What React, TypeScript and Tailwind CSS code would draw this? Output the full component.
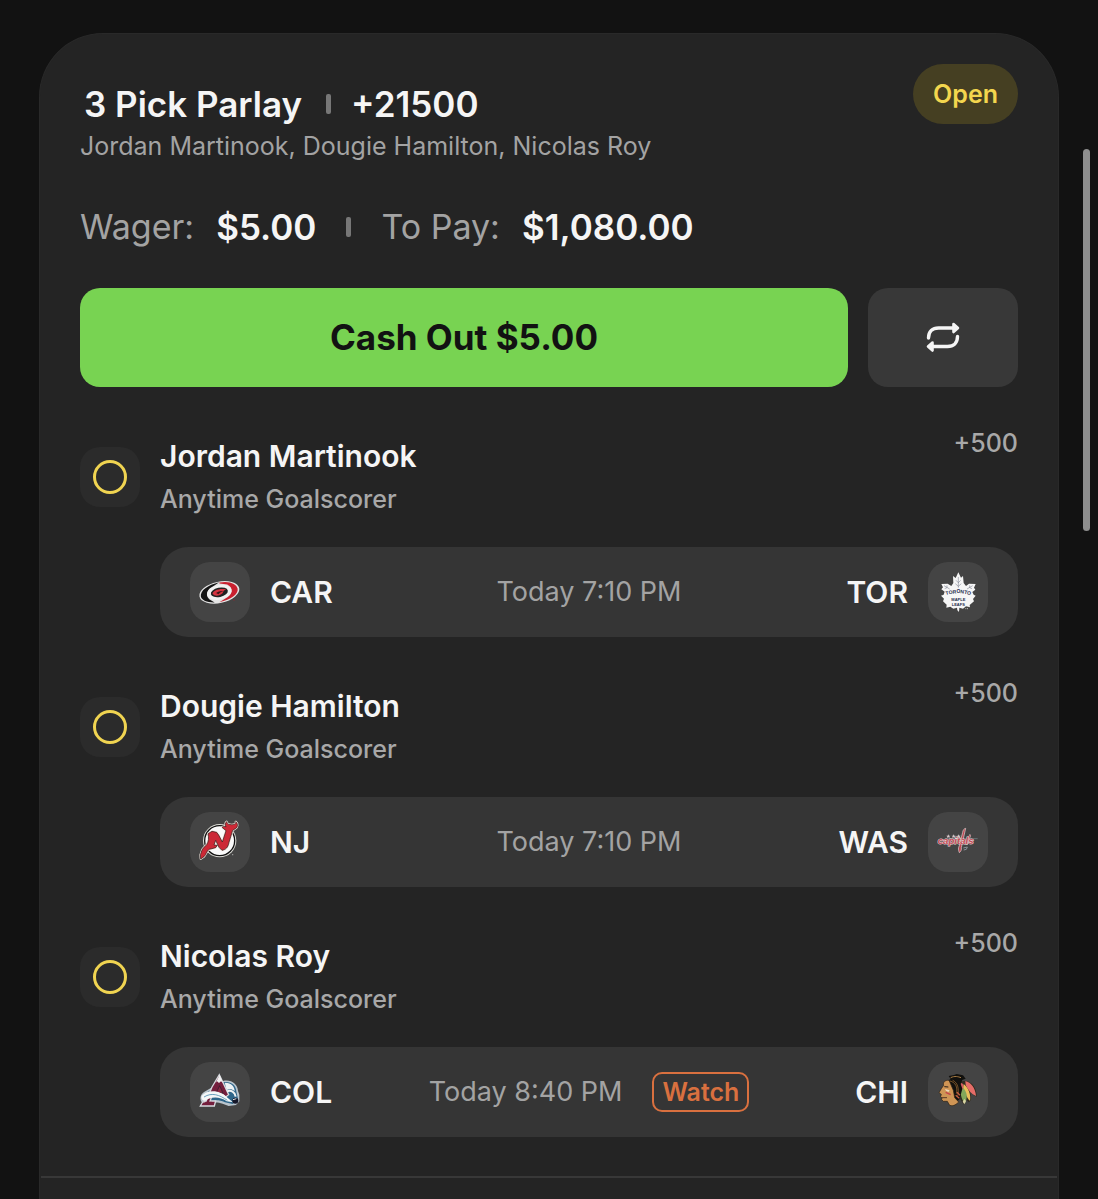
import type { ReactNode } from 'react';

type Team = { abbr: string; logo: ReactNode };

type Leg = {
  player: string;
  market: string;
  odds: string;
  away: Team;
  home: Team;
  time: string;
  watch?: boolean;
};

const legs: Leg[] = [
  {
    player: 'Jordan Martinook',
    market: 'Anytime Goalscorer',
    odds: '+500',
    away: { abbr: 'CAR', logo: <HurricanesLogo /> },
    home: { abbr: 'TOR', logo: <LeafsLogo /> },
    time: 'Today 7:10 PM',
  },
  {
    player: 'Dougie Hamilton',
    market: 'Anytime Goalscorer',
    odds: '+500',
    away: { abbr: 'NJ', logo: <DevilsLogo /> },
    home: { abbr: 'WAS', logo: <CapitalsLogo /> },
    time: 'Today 7:10 PM',
  },
  {
    player: 'Nicolas Roy',
    market: 'Anytime Goalscorer',
    odds: '+500',
    away: { abbr: 'COL', logo: <AvalancheLogo /> },
    home: { abbr: 'CHI', logo: <BlackhawksLogo /> },
    time: 'Today 8:40 PM',
    watch: true,
  },
];

export default function App() {
  return (
    <div className="flex min-h-screen flex-col bg-[#121212] px-[39px] pt-[33px] font-['Inter','Liberation_Sans',sans-serif] text-[#f5f5f5]">
      <main className="flex-1 rounded-t-[64px] border border-b-0 border-[#292929] bg-[#242424]">
        <div className="px-10 pt-[30px]">
          <header className="flex items-start justify-between">
            <div className="pt-4">
              <h1 className="flex items-center pl-1 text-[35px] leading-[48px] font-semibold">
                3 Pick Parlay
                <Separator className="mr-5 ml-6" />
                +21500
              </h1>
              <p className="text-[25px] leading-9 text-[#a3a3a3]">
                {legs.map(l => l.player).join(', ')}
              </p>
            </div>
            <span className="rounded-full bg-[#453f22] px-5 text-[25px] leading-[60px] font-semibold text-[#f3d64e]">
              Open
            </span>
          </header>

          {/* stake and payout */}
          <div className="mt-9 flex items-center text-[35px] leading-[54px]">
            <span className="text-[34px] text-[#a3a3a3]">Wager:</span>
            <span className="ml-[22px] font-semibold">$5.00</span>
            <Separator className="mx-[30px]" />
            <span className="text-[34px] text-[#a3a3a3]">To Pay:</span>
            <span className="ml-[22px] font-semibold">$1,080.00</span>
          </div>

          <div className="mt-[34px] flex gap-5">
            <button type="button" className="h-[99px] flex-1 rounded-[20px] bg-[#78d352] text-[35px] font-bold text-[#121212]">
              Cash Out $5.00
            </button>
            <button type="button" aria-label="Repeat bet" className="flex h-[99px] w-[150px] items-center justify-center rounded-[20px] bg-[#383838]">
              <RepeatIcon />
            </button>
          </div>

          <ul className="mt-12 space-y-12">
            {legs.map(leg => (
              <LegRow key={leg.player} leg={leg} />
            ))}
          </ul>
        </div>
        <hr className="mx-px mt-[39px] border-t-2 border-[#383838]" />
      </main>

      {/* scroll thumb */}
      <div className="fixed top-[149px] right-2 h-[382px] w-[7px] rounded-full bg-[#8e8e8e]" />
    </div>
  );
}

function Separator({ className }: { className: string }) {
  return <span className={`h-5 w-[5px] rounded-xs bg-[#777] ${className}`} />;
}

function LegRow({ leg }: { leg: Leg }) {
  return (
    <li className="flex gap-5">
      <span className="mt-3 flex size-[60px] shrink-0 items-center justify-center rounded-[20px] bg-[#2b2b2b]">
        <span className="size-[34px] rounded-full border-3 border-[#f0d451]" />
      </span>
      <div className="flex-1">
        <div className="flex items-start justify-between">
          <div>
            <h2 className="text-[30px] leading-[42px] font-semibold">{leg.player}</h2>
            <p className="text-[25px] leading-[44px] font-medium text-[#a8a8a8]">{leg.market}</p>
          </div>
          <span className="text-[25px] leading-4 font-medium text-[#a8a8a8]">{leg.odds}</span>
        </div>
        <div className="mt-[26px] flex h-[90px] items-center justify-between rounded-[28px] bg-[#353535] px-[30px]">
          <div className="flex flex-1 items-center gap-5">
            <TeamTile>{leg.away.logo}</TeamTile>
            <span className="text-[30px] font-semibold">{leg.away.abbr}</span>
          </div>
          <div className="flex items-center gap-[30px]">
            <span className="text-[27px] text-[#a3a3a3]">{leg.time}</span>
            {leg.watch && (
              <button type="button" className="h-10 rounded-[10px] border-2 border-[#d9703f] px-2 text-[25px] leading-9 font-semibold text-[#d9703f]">
                Watch
              </button>
            )}
          </div>
          <div className="flex flex-1 items-center justify-end gap-5">
            <span className="text-[30px] font-semibold">{leg.home.abbr}</span>
            <TeamTile>{leg.home.logo}</TeamTile>
          </div>
        </div>
      </div>
    </li>
  );
}

function TeamTile({ children }: { children: ReactNode }) {
  return <span className="size-[60px] rounded-[20px] bg-[#444]">{children}</span>;
}

function RepeatIcon() {
  return (
    <svg viewBox="0 0 36 32" className="h-8 w-9" fill="none" stroke="#f5f5f5" strokeWidth="3.400" strokeLinecap="round" strokeLinejoin="round">
      <path d="M3.500 16C3.500 9.500 7.500 6 13.500 6H28" />
      <path d="M28.500 2L33 6L28.500 10Z" fill="#f5f5f5" strokeWidth="2.600" />
      <path d="M32.500 14.500C32.500 21 28.500 24.500 22.500 24.500H8" />
      <path d="M7.500 20.500L3 24.500L7.500 28.500Z" fill="#f5f5f5" strokeWidth="2.600" />
    </svg>
  );
}

function HurricanesLogo() {
  return (
    <svg viewBox="30 21 180 180" className="size-full">
      <g transform="rotate(-12 118 112)">
        <ellipse cx="118" cy="112" rx="61" ry="32" fill="#e4e4e4" />
        <path d="M61 113C63 94 88 83 124 82L104 90C84 94 74 110 84 126L98 139C76 135 62 126 61 113Z" fill="#151515" />
        <path d="M124 83C156 84 174 98 174 113C173 129 148 141 112 141L132 134C156 128 164 108 146 94L124 86Z" fill="#c9202f" />
        <ellipse cx="118" cy="112" rx="37" ry="22" fill="#f2f2f2" />
        <ellipse cx="118" cy="112" rx="26" ry="14" fill="#222" />
        <path d="M97 112C100 103 118 99 140 107C134 108 130 111 127 117C116 123 102 122 97 112Z" fill="#d4323f" />
        <path d="M108 112C115 108 125 108 132 111C124 111 119 114 114 117Z" fill="#391317" />
      </g>
      <circle cx="162" cy="135" r="2" fill="#872b33" />
    </svg>
  );
}

function LeafsLogo() {
  return (
    <svg viewBox="25 21 180 180" className="size-full">
      <path
        d="M116 52L124 68L130 63L132 84L139 93L148 86L168 87L163 98L167 104L158 111L162 119L168 122L160 132L163 139L150 150L151 157L139 154L130 161L119 158L118 171L113 166L112 158L101 161L92 155L80 158L81 149L70 139L73 131L64 122L72 119L75 110L65 103L70 97L65 87L84 86L95 93L101 84L100 63L108 69Z"
        fill="#f6f6f6"
      />
      <g fill="none" stroke="#6b7080" strokeWidth="1.500">
        <path d="M116 66V98M116 83L109 76M116 83L123 76M116 94L107 86M116 94L125 86" />
        <path d="M73 92L90 102M82 98V91M82 98L75 101M159 92L142 102M150 98V91M150 98L157 101" />
      </g>
      <path id="leafs-arc" d="M74 122Q116 108 158 122" fill="none" />
      <g fill="#1d2a4c" fontFamily="Liberation Sans, sans-serif" fontWeight="700" textAnchor="middle">
        <text fontSize="15">
          <textPath href="#leafs-arc" startOffset="50%">TORONTO</textPath>
        </text>
        <text x="116" y="139" fontSize="12">MAPLE</text>
        <text x="116" y="153" fontSize="12">LEAFS</text>
      </g>
      <path d="M137 161H146" stroke="#bdbdbd" strokeWidth="3" strokeDasharray="3 2" />
    </svg>
  );
}

function DevilsLogo() {
  const letter =
    'M84 86L96 79L110 82L116 90L127 111L138 77L126 67C128 64 133 64 138 65C134 60 135 53 140 50C141 57 147 59 155 59C164 59 169 55 167 50C175 56 174 67 166 71L158 76L147 112C144 128 137 134 126 136L117 127L107 106L102 120L112 121L107 128L92 132C80 133 80 148 72 155L62 162L61 149C65 142 64 134 72 127L80 119C86 110 87 98 84 86Z';
  return (
    <svg viewBox="30 21 180 180" className="size-full">
      <circle cx="119" cy="107" r="50" fill="#dcdcd6" />
      <circle cx="119" cy="107" r="45" fill="#fafafa" stroke="#111" strokeWidth="4" />
      <path d={letter} fill="none" stroke="#f3e9df" strokeWidth="6" strokeLinejoin="round" />
      <path d={letter} fill="#cc2936" stroke="#291313" strokeWidth="2" strokeLinejoin="round" />
      <circle cx="158" cy="149" r="2" fill="#aaa" />
    </svg>
  );
}

function CapitalsLogo() {
  return (
    <svg viewBox="25 21 180 180" className="size-full">
      <path d="M76 101H174" stroke="#77868e" strokeWidth="2" />
      <g fill="#d8c7c9">
        <path d="M84 92l2-4 2 4 4 0-3 3 1 4-4-2-4 2 1-4-3-3z" />
        <path d="M100 92l2-4 2 4 4 0-3 3 1 4-4-2-4 2 1-4-3-3z" />
        <path d="M115 92l2-4 2 4 4 0-3 3 1 4-4-2-4 2 1-4-3-3z" />
      </g>
      <path d="M129 82C130 75 133 71 138 70L125 128C126 134 124 139 119 143C116 135 115 129 119 122Z" fill="#bd4650" stroke="#dfd6d7" strokeWidth="2" />
      <path d="M151 91L142 117" stroke="#c9b9bb" strokeWidth="6" strokeLinecap="round" />
      <path d="M151 91L142 117" stroke="#ba4651" strokeWidth="3" strokeLinecap="round" />
      <text x="54" y="118" fill="#c64d57" stroke="#e2d8d9" strokeWidth="3" paintOrder="stroke" fontFamily="Liberation Sans, sans-serif" fontSize="29" fontWeight="700" fontStyle="italic">
        capitals
      </text>
      <path d="M131 129L143 126L140 133L132 135" fill="none" stroke="#8b9298" strokeWidth="3" />
    </svg>
  );
}

function AvalancheLogo() {
  return (
    <svg viewBox="30 21 180 180" className="size-full">
      <path d="M129 78C153 72 173 87 174 108L178 119V139L168 150L146 153L128 146C101 137 91 148 75 148C58 143 57 121 72 111Z" fill="#b9c4cd" />
      <path d="M130 82C151 78 168 89 169 109L174 132L158 147L135 142C109 130 95 140 79 139C64 132 68 117 79 113Z" fill="#2f668a" />
      <path d="M118 59L146 119L137 126L119 111L100 113L90 138H107L103 153H61L68 141L78 139L96 96Z" fill="#741f3d" stroke="#d6d9de" strokeWidth="4" />
      <path d="M119 60L129 83L123 79L117 84L111 79L107 83Z" fill="#f1f1f1" />
      <path d="M119 92L129 115L109 113Z" fill="#8b2945" stroke="#271c2a" strokeWidth="2" />
      <path d="M65 123C83 101 121 107 139 125L159 142L140 139C117 121 86 127 76 138C67 137 62 130 65 123Z" fill="#f5f7f8" />
      <path d="M72 126C96 111 119 120 142 136" fill="none" stroke="#6aa0bd" strokeWidth="3" />
      <path d="M134 83C153 82 164 93 164 109C156 101 148 102 140 105Z" fill="#eef3f5" />
      <path d="M141 109C153 104 165 111 167 125" fill="none" stroke="#f1f4f5" strokeWidth="6" />
      <path d="M76 145H96" stroke="#741f3d" strokeWidth="9" />
      <circle cx="166" cy="137" r="9" fill="#16182a" />
      <path d="M159 134L169 131" stroke="#dce4e9" strokeWidth="3" />
    </svg>
  );
}

function BlackhawksLogo() {
  return (
    <svg viewBox="25 21 180 180" className="size-full">
      <path d="M112 92C119 76 132 78 139 78C157 81 172 99 171 125C162 123 154 115 149 106C156 122 157 138 147 142L137 131L133 149C124 139 120 124 112 120Z" fill="#302b20" />
      <path d="M120 85C130 81 134 93 132 103C131 113 121 117 113 112Z" fill="#d55c60" />
      <path d="M137 78C154 82 167 99 169 123C155 117 145 105 138 90Z" fill="#e56d68" />
      <path d="M132 87C146 98 155 119 151 137C141 129 136 113 131 101Z" fill="#e9be5b" />
      <path d="M131 99C143 112 144 127 136 145C126 135 122 118 124 108Z" fill="#82a75a" />
      <path d="M134 132L139 138L134 148L129 140Z" fill="#d9d3a3" />
      <path d="M84 77L93 72L87 63L103 60L111 57L130 61L138 71L128 75L123 87L128 101L120 132L110 142L89 112Z" fill="#11100d" />
      <path d="M93 68C105 62 116 65 124 68" fill="none" stroke="#a67b43" strokeWidth="3" />
      <path d="M88 76C76 75 69 82 72 91L65 101L58 113L65 118L63 125L67 129L66 134L71 139L83 139L90 151C102 155 111 147 117 141L105 128L101 106Z" fill="#cf9555" stroke="#2b2115" strokeWidth="2" />
      <path d="M91 78C107 82 115 96 110 116M99 76C114 83 119 100 114 124" fill="none" stroke="#a97335" strokeWidth="2" />
      <path d="M74 95L86 96" stroke="#241b15" strokeWidth="3" />
      <path d="M76 102L90 106L86 111L79 107Z" fill="#ead9be" />
      <path d="M78 112L93 119" stroke="#c5424b" strokeWidth="4" />
      <path d="M67 128H82" stroke="#5b3925" strokeWidth="3" />
      <path d="M112 112L121 121M108 121L119 130" stroke="#c85e42" strokeWidth="4" />
    </svg>
  );
}
